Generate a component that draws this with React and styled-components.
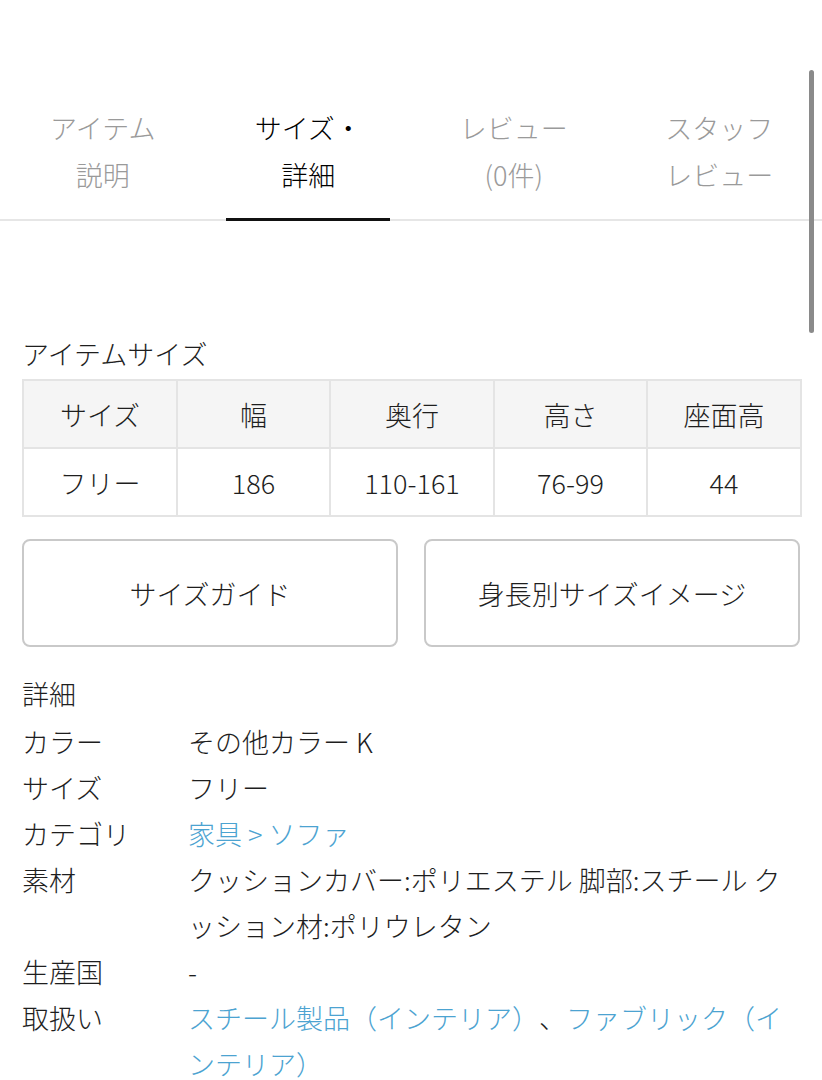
import React from 'react';
import styled, { createGlobalStyle } from 'styled-components';

const GlobalStyle = createGlobalStyle`
  html, body {
    margin: 0;
    padding: 0;
    background: #fff;
  }
  body {
    font-family: "Noto Sans CJK JP", "Noto Sans", sans-serif;
    font-weight: 300;
    color: #1e1e1e;
    text-spacing-trim: space-all;
    -webkit-font-smoothing: antialiased;
  }
`;

const Page = styled.div`
  width: 822px;
  padding-top: 104px;
`;

const TabBar = styled.nav`
  display: grid;
  grid-template-columns: repeat(4, 1fr);
  border-bottom: 2px solid #e6e6e6;
`;

const Tab = styled.div`
  position: relative;
  text-align: center;
  font-size: 27px;
  line-height: 47px;
  padding-bottom: 21px;
  color: ${ (p) => (p.active ? '#000' : '#9a9a9a') };

  &::after {
    content: '';
    display: ${ (p) => (p.active ? 'block' : 'none') };
    position: absolute;
    left: 10%;
    right: 10%;
    bottom: -2px;
    height: 3px;
    background: #111;
  }
`;

const Content = styled.section`
  padding: 0 22px;
`;

const Heading = styled.h3`
  margin: 0;
  font-size: 27px;
  font-weight: 300;
  line-height: 46px;
`;

const SizeHeading = styled(Heading)`
  margin-top: 110px;
  margin-bottom: 2px;
`;

const SizeTable = styled.table`
  width: 100%;
  table-layout: fixed;
  border-collapse: collapse;
  font-size: 27px;
`;

const Cell = styled.td`
  height: 66px;
  padding: 0;
  text-align: center;
  border: 2px solid #e4e4e4;
  background: ${ (p) => (p.head ? '#f5f5f5' : '#fff') };
`;

const ButtonRow = styled.div`
  display: grid;
  grid-template-columns: 1fr 1fr;
  gap: 26px;
  margin-top: 22px;
`;

const GuideButton = styled.button`
  height: 108px;
  background: #fff;
  border: 2px solid #c9c9c9;
  border-radius: 8px;
  font-family: inherit;
  font-weight: 300;
  font-size: 27px;
  color: #1e1e1e;
  cursor: pointer;
`;

const DetailHeading = styled(Heading)`
  margin-top: 24px;
  margin-bottom: 2px;
`;

const DetailList = styled.dl`
  display: grid;
  grid-template-columns: 166px 1fr;
  margin: 0;
  font-size: 27px;
  line-height: 46px;
`;

const Label = styled.dt`
  margin: 0;
`;

const Value = styled.dd`
  margin: 0;
  line-break: anywhere;
  word-break: break-all;
`;

const Link = styled.a`
  color: #4ca3d1;
  text-decoration: none;
`;

const ScrollThumb = styled.div`
  position: fixed;
  top: 70px;
  right: 8px;
  width: 5px;
  height: 263px;
  border-radius: 3px;
  background: #8a8a8a;
`;

const tabs = [
  ['アイテム', '説明'],
  ['サイズ・', '詳細'],
  ['レビュー', '(0件)'],
  ['スタッフ', 'レビュー'],
];

const sizeHead = ['サイズ', '幅', '奥行', '高さ', '座面高'];
const sizeRow = ['フリー', '186', '110-161', '76-99', '44'];
const colWidths = [154, 153, 164, 153, 154];

const App = () => (
  <>
    <GlobalStyle />
    <Page>
      <TabBar>
        { tabs.map(([a, b], i) => (
          <Tab key={ a + b } active={ i === 1 }>
            { a }
            <br />
            { b }
          </Tab>
        )) }
      </TabBar>

      <Content>
        <SizeHeading>アイテムサイズ</SizeHeading>
        <SizeTable>
          <colgroup>
            { colWidths.map((w, i) => <col key={ i } style={ { width: w } } />) }
          </colgroup>
          <tbody>
            <tr>
              { sizeHead.map((h) => <Cell head key={ h }>{ h }</Cell>) }
            </tr>
            <tr>
              { sizeRow.map((v) => <Cell key={ v }>{ v }</Cell>) }
            </tr>
          </tbody>
        </SizeTable>

        <ButtonRow>
          <GuideButton>サイズガイド</GuideButton>
          <GuideButton>身長別サイズイメージ</GuideButton>
        </ButtonRow>

        <DetailHeading>詳細</DetailHeading>
        <DetailList>
          <Label>カラー</Label>
          <Value>その他カラー K</Value>
          <Label>サイズ</Label>
          <Value>フリー</Value>
          <Label>カテゴリ</Label>
          <Value><Link href="#">家具 &gt; ソファ</Link></Value>
          <Label>素材</Label>
          <Value>クッションカバー:ポリエステル 脚部:スチール クッション材:ポリウレタン</Value>
          <Label>生産国</Label>
          <Value>-</Value>
          <Label>取扱い</Label>
          <Value>
            <Link href="#">スチール製品（インテリア）</Link>、<Link href="#">ファブリック（インテリア）</Link>
          </Value>
        </DetailList>
      </Content>
    </Page>
    <ScrollThumb />
  </>
);

export default App;
